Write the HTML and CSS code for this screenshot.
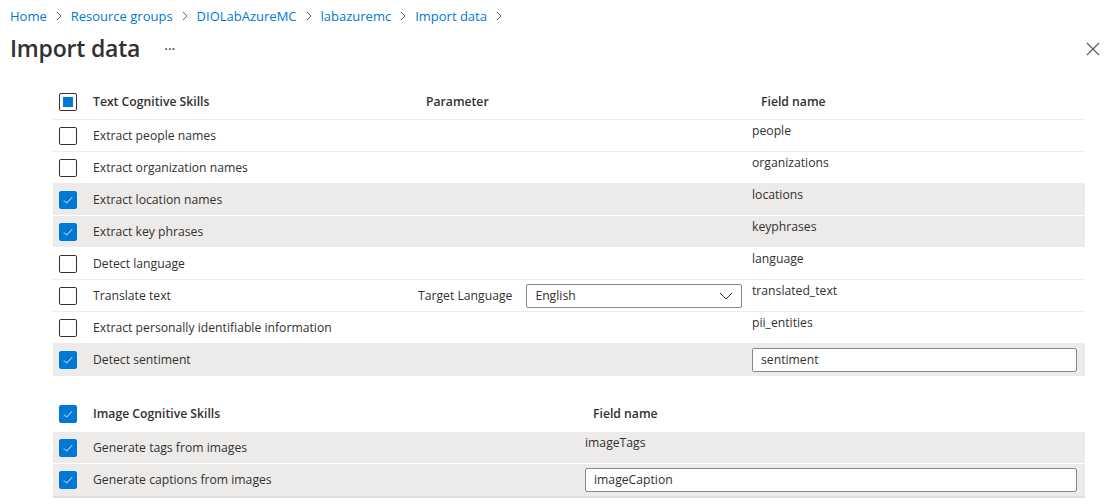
FILE: index.html
```html
<!DOCTYPE html>
<html lang="en">
<head>
<meta charset="utf-8">
<title>Import data</title>
<link rel="stylesheet" href="styles.css">
</head>
<body>
<nav class="breadcrumb">
  <a href="#">Home</a>
  <svg class="crumb-sep" width="8" height="10" viewBox="0 0 8 10"><polyline points="2,1 6,5 2,9" fill="none" stroke="#605e5c" stroke-width="1"/></svg>
  <a href="#">Resource groups</a>
  <svg class="crumb-sep" width="8" height="10" viewBox="0 0 8 10"><polyline points="2,1 6,5 2,9" fill="none" stroke="#605e5c" stroke-width="1"/></svg>
  <a href="#">DIOLabAzureMC</a>
  <svg class="crumb-sep" width="8" height="10" viewBox="0 0 8 10"><polyline points="2,1 6,5 2,9" fill="none" stroke="#605e5c" stroke-width="1"/></svg>
  <a href="#">labazuremc</a>
  <svg class="crumb-sep" width="8" height="10" viewBox="0 0 8 10"><polyline points="2,1 6,5 2,9" fill="none" stroke="#605e5c" stroke-width="1"/></svg>
  <a href="#">Import data</a>
  <svg class="crumb-sep" width="8" height="10" viewBox="0 0 8 10"><polyline points="2,1 6,5 2,9" fill="none" stroke="#605e5c" stroke-width="1"/></svg>
</nav>

<header class="titlebar">
  <h1 class="title">Import data</h1>
  <span class="more">···</span>
  <span class="spacer"></span>
  <svg class="close" width="14" height="14" viewBox="0 0 14 14"><path d="M1,1 L13,13 M13,1 L1,13" stroke="#605e5c" stroke-width="1.2" fill="none"/></svg>
</header>

<main class="content">
  <section class="skills text-skills">
    <div class="row head">
      <span class="cb cb-partial"><span class="cb-dot"></span></span>
      <span class="name">Text Cognitive Skills</span>
      <span class="param">Parameter</span>
      <span class="field">Field name</span>
    </div>
    <div class="row">
      <span class="cb"></span>
      <span class="name">Extract people names</span>
      <span class="param"></span>
      <span class="field">people</span>
    </div>
    <div class="row">
      <span class="cb"></span>
      <span class="name">Extract organization names</span>
      <span class="param"></span>
      <span class="field">organizations</span>
    </div>
    <div class="row sel">
      <span class="cb cb-on"><svg width="18" height="18" viewBox="0 0 18 18"><polyline points="4.5,9.5 7.5,12.5 13.5,6" fill="none" stroke="#fff" stroke-width="1"/></svg></span>
      <span class="name">Extract location names</span>
      <span class="param"></span>
      <span class="field">locations</span>
    </div>
    <div class="row sel">
      <span class="cb cb-on"><svg width="18" height="18" viewBox="0 0 18 18"><polyline points="4.5,9.5 7.5,12.5 13.5,6" fill="none" stroke="#fff" stroke-width="1"/></svg></span>
      <span class="name">Extract key phrases</span>
      <span class="param"></span>
      <span class="field">keyphrases</span>
    </div>
    <div class="row">
      <span class="cb"></span>
      <span class="name">Detect language</span>
      <span class="param"></span>
      <span class="field">language</span>
    </div>
    <div class="row">
      <span class="cb"></span>
      <span class="name">Translate text</span>
      <span class="param param-ctl">
        <span class="param-label">Target Language</span>
        <span class="dropdown"><span>English</span>
          <svg width="14" height="8" viewBox="0 0 14 8"><polyline points="1,1 7,7 13,1" fill="none" stroke="#323130" stroke-width="1"/></svg>
        </span>
      </span>
      <span class="field">translated_text</span>
    </div>
    <div class="row">
      <span class="cb"></span>
      <span class="name">Extract personally identifiable information</span>
      <span class="param"></span>
      <span class="field">pii_entities</span>
    </div>
    <div class="row sel">
      <span class="cb cb-on"><svg width="18" height="18" viewBox="0 0 18 18"><polyline points="4.5,9.5 7.5,12.5 13.5,6" fill="none" stroke="#fff" stroke-width="1"/></svg></span>
      <span class="name">Detect sentiment</span>
      <span class="param"></span>
      <span class="field field-input"><span class="input">sentiment</span></span>
    </div>
  </section>

  <section class="skills image-skills">
    <div class="row head">
      <span class="cb cb-on"><svg width="18" height="18" viewBox="0 0 18 18"><polyline points="4.5,9.5 7.5,12.5 13.5,6" fill="none" stroke="#fff" stroke-width="1"/></svg></span>
      <span class="name">Image Cognitive Skills</span>
      <span class="field">Field name</span>
    </div>
    <div class="row sel">
      <span class="cb cb-on"><svg width="18" height="18" viewBox="0 0 18 18"><polyline points="4.5,9.5 7.5,12.5 13.5,6" fill="none" stroke="#fff" stroke-width="1"/></svg></span>
      <span class="name">Generate tags from images</span>
      <span class="field">imageTags</span>
    </div>
    <div class="row sel last">
      <span class="cb cb-on"><svg width="18" height="18" viewBox="0 0 18 18"><polyline points="4.5,9.5 7.5,12.5 13.5,6" fill="none" stroke="#fff" stroke-width="1"/></svg></span>
      <span class="name">Generate captions from images</span>
      <span class="field field-input"><span class="input">imageCaption</span></span>
    </div>
  </section>
</main>
</body>
</html>
```

FILE: styles.css
```css
* { box-sizing: border-box; }
html, body { margin: 0; padding: 0; background: #fff; }
body {
  font-family: "Segoe UI", "Open Sans", "Noto Sans", sans-serif;
  color: #323130;
  font-size: 12.2px;
  width: 1106px;
  height: 504px;
  overflow: hidden;
}

.breadcrumb {
  height: 31px;
  display: flex;
  align-items: center;
  padding-left: 10px;
  font-size: 13px;
  gap: 8px;
}
.breadcrumb a { color: #0078d4; text-decoration: none; }
.crumb-sep { display: block; margin-top: 1px; }

.titlebar {
  height: 33px;
  display: flex;
  align-items: center;
  padding-left: 10px;
  padding-right: 6px;
}
.title {
  margin: 0;
  font-size: 23px;
  font-weight: 600;
  line-height: 30px;
  letter-spacing: -0.2px;
}
.more { margin-left: 24px; font-size: 14px; color: #323130; margin-top: 2px; }
.spacer { flex: 1; }
.close { display: block; margin-top: 2px; }

.content { padding-left: 53px; padding-top: 21px; }

.skills { width: 1032px; }
.row {
  display: grid;
  grid-template-columns: 40px 325px 334px 333px;
  height: 32px;
  border-bottom: 1px solid #edebe9;
  align-items: center;
}
.image-skills .row { grid-template-columns: 40px 492px 500px; }
.row.head { height: 35px; font-weight: 600; }
.row.sel { background: #edebe9; border-bottom-color: #fff; }
.text-skills .row:last-child { border-bottom: none; }
.image-skills { margin-top: 20px; }
.image-skills .row.head { height: 36px; border-bottom: none; }
.image-skills .row.last { border-bottom: 2px solid #e1dfdd; height: 34px; }

.cb {
  width: 18px; height: 18px;
  margin-left: 6px;
  border: 1px solid #323130;
  border-radius: 2px;
  background: #fff;
  display: flex;
  align-items: center;
  justify-content: center;
}
.cb-on { background: #0078d4; border-color: #0078d4; }
.cb-on svg { display: block; }
.cb-dot { width: 10px; height: 10px; background: #0078d4; }

.name { line-height: 20px; }
.param { line-height: 20px; }
.head .param { padding-left: 8px; }
.field { line-height: 20px; align-self: start; padding-top: 1px; }
.head .field { align-self: center; padding-top: 0; padding-left: 9px; }
.image-skills .head .field { padding-left: 8px; }

.param-ctl {
  display: flex;
  align-items: center;
  gap: 14px;
}
.dropdown {
  width: 216px;
  height: 24px;
  border: 1px solid #8a8886;
  border-radius: 2px;
  display: flex;
  align-items: center;
  justify-content: space-between;
  padding: 0 8px 0 8px;
}
.dropdown svg { display: block; }

.field-input { align-self: center; padding-top: 0; }
.input {
  display: block;
  width: 325px;
  height: 24px;
  border: 1px solid #8a8886;
  border-radius: 2px;
  background: #fff;
  padding-left: 8px;
  line-height: 22px;
}
.image-skills .input { width: 492px; }
```
